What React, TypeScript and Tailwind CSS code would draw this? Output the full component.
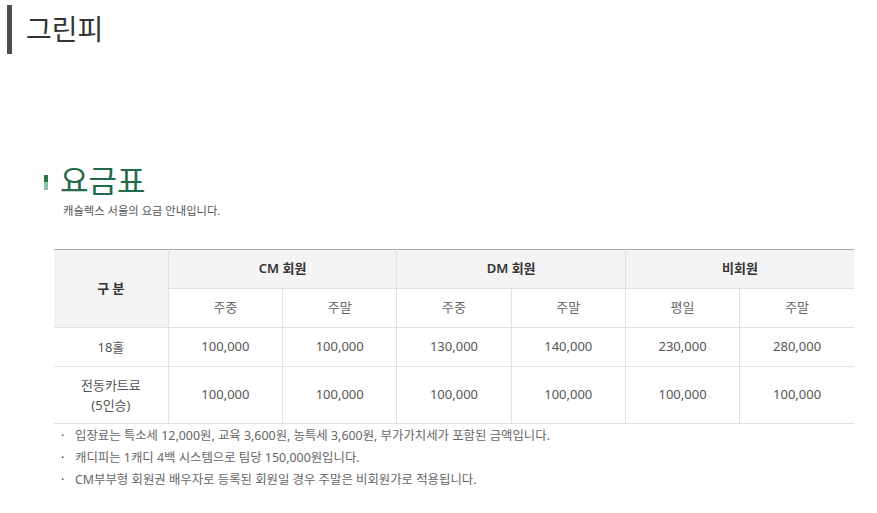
import React from "react";

const font = { fontFamily: '"Noto Sans", "Noto Sans CJK KR", sans-serif' };

const subHeads = ["주중", "주말", "주중", "주말", "평일", "주말"];
const rows = [
  { label: ["18홀"], values: ["100,000", "100,000", "130,000", "140,000", "230,000", "280,000"], h: "h-[39px]" },
  { label: ["전동카트료", "(5인승)"], values: ["100,000", "100,000", "100,000", "100,000", "100,000", "100,000"], h: "h-[57px]" },
];
const notes = [
  "입장료는 특소세 12,000원, 교육 3,600원, 농특세 3,600원, 부가가치세가 포함된 금액입니다.",
  "캐디피는 1캐디 4백 시스템으로 팀당 150,000원입니다.",
  "CM부부형 회원권 배우자로 등록된 회원일 경우 주말은 비회원가로 적용됩니다.",
];

const App = () => {
  return (
    <div className="w-[877px] h-[513px] bg-white overflow-hidden" style={font}>
      <div className="mt-[5px] ml-[7px] h-[49px] border-l-[5px] border-[#4d4d4d] pl-[14px] flex items-start">
        <h1 className="text-[28px] leading-[40px] text-[#333] mt-[4px]">그린피</h1>
      </div>

      <section className="pl-[54px] mt-[104px]">
        <div className="flex items-center">
          <div className="flex flex-col w-[4px] -ml-[10px] mr-[14px] mt-[6px]">
            <span className="h-[7px] bg-[#2b7550]" />
            <span className="h-[8px] bg-[#8fc3a7]" />
          </div>
          <h2 className="text-[31px] leading-[40px] text-[#24694a] -ml-[2px] mt-[2px]">요금표</h2>
        </div>
        <p className="text-[11.3px] leading-[16px] text-[#555] ml-[9px] mt-[3px]">캐슬렉스 서울의 요금 안내입니다.</p>

        <table className="mt-[30px] w-[800px] table-fixed border-collapse text-center text-[13px] border-t border-t-[#a6a6a6]">
          <thead>
            <tr className="h-[39px]">
              <th rowSpan={2} className="bg-[#f4f4f4] font-semibold text-[#333] border-b border-[#e2e2e2]">구 분</th>
              <th colSpan={2} className="bg-[#f4f4f4] font-semibold text-[#333] border border-[#e2e2e2] border-t-0">CM 회원</th>
              <th colSpan={2} className="bg-[#f4f4f4] font-semibold text-[#333] border border-[#e2e2e2] border-t-0">DM 회원</th>
              <th colSpan={2} className="bg-[#f4f4f4] font-semibold text-[#333] border-b border-l border-[#e2e2e2]">비회원</th>
            </tr>
            <tr className="h-[39px]">
              {subHeads.map((s, i) => (
                <th
                  key={i}
                  className={`font-normal text-[#666] border-b border-[#e2e2e2] ${i === 5 ? "border-l" : "border-l border-r"}`}
                >
                  {s}
                </th>
              ))}
            </tr>
          </thead>
          <tbody>
            {rows.map((r, ri) => (
              <tr key={ri} className={r.h}>
                <td className="text-[#555] leading-[20px] border-b border-[#e2e2e2]">
                  {r.label.map((l, li) => (
                    <div key={li}>{l}</div>
                  ))}
                </td>
                {r.values.map((v, vi) => (
                  <td key={vi} className={`text-[#555] border-b border-[#e2e2e2] ${vi === 5 ? "border-l" : "border-l border-r"}`}>
                    {v}
                  </td>
                ))}
              </tr>
            ))}
          </tbody>
        </table>

        <ul className="mt-[1px] text-[12.4px] leading-[22px] text-[#666]">
          {notes.map((n, i) => (
            <li key={i} className="flex">
              <span className="w-[21px] pl-[7px] text-[#444]">·</span>
              <span>{n}</span>
            </li>
          ))}
        </ul>
      </section>
    </div>
  );
};

export default App;
